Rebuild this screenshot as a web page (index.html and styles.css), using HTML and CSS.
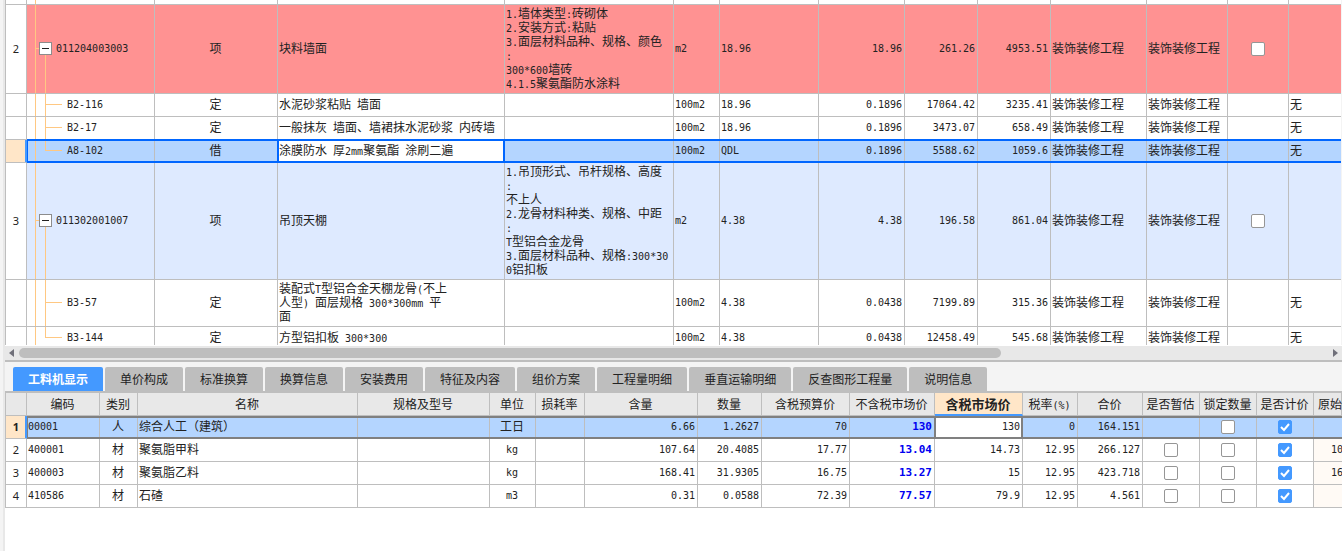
FILE: index.html
```html
<!DOCTYPE html>
<html lang="zh-CN">
<head>
<meta charset="utf-8">
<title>工料机显示</title>
<link rel="stylesheet" href="styles.css">
</head>
<body>
<main class="app">
<section class="upper" aria-label="清单">
<table class="grid bill">
<colgroup><col class="w22"><col class="w128"><col class="w123"><col class="w227"><col class="w169"><col class="w46"><col class="w99"><col class="w86"><col class="w73"><col class="w73"><col class="w96"><col class="w81"><col class="w61"><col></colgroup>
<tbody>
<tr class="h5"><td></td><td class="trunk"></td><td></td><td></td><td></td><td></td><td></td><td></td><td></td><td></td><td></td><td></td><td></td><td></td></tr>
<tr class="h89 red"><td class="idx">2</td><td class="parent"><div class="node"><button class="toggle" aria-label="折叠"></button><span class="n">011204003003</span></div></td><td class="c">项</td><td>块料墙面</td><td><span class="n">1.</span>墙体类型<span class="n">:</span>砖砌体<br><span class="n">2.</span>安装方式<span class="n">:</span>粘贴<br><span class="n">3.</span>面层材料品种、规格、颜色<br><span class="n">:</span><br><span class="n">300*600</span>墙砖<br><span class="n">4.1.5</span>聚氨酯防水涂料</td><td class="n">m2</td><td class="n">18.96</td><td class="n r">18.96</td><td class="n r">261.26</td><td class="n r">4953.51</td><td>装饰装修工程</td><td>装饰装修工程</td><td class="c"><input type="checkbox" class="check" aria-label="选择第2项"></td><td></td></tr>
<tr class="h23"><td class="idx"></td><td class="child n">B2-116</td><td class="c">定</td><td>水泥砂浆粘贴<span class="n"> </span>墙面</td><td></td><td class="n">100m2</td><td class="n">18.96</td><td class="n r">0.1896</td><td class="n r">17064.42</td><td class="n r">3235.41</td><td>装饰装修工程</td><td>装饰装修工程</td><td></td><td>无</td></tr>
<tr class="h23"><td class="idx"></td><td class="child n">B2-17</td><td class="c">定</td><td>一般抹灰<span class="n"> </span>墙面、墙裙抹水泥砂浆<span class="n"> </span>内砖墙</td><td></td><td class="n">100m2</td><td class="n">18.96</td><td class="n r">0.1896</td><td class="n r">3473.07</td><td class="n r">658.49</td><td>装饰装修工程</td><td>装饰装修工程</td><td></td><td>无</td></tr>
<tr class="h23 current"><td class="idx"></td><td class="child last n lead">A8-102</td><td class="c">借</td><td class="cell">涂膜防水<span class="n"> </span>厚<span class="n">2mm</span>聚氨酯<span class="n"> </span>涂刷二遍</td><td></td><td class="n">100m2</td><td class="n">QDL</td><td class="n r">0.1896</td><td class="n r">5588.62</td><td class="n r">1059.6</td><td>装饰装修工程</td><td>装饰装修工程</td><td></td><td>无</td></tr>
<tr class="h117 blue"><td class="idx">3</td><td class="parent"><div class="node"><button class="toggle" aria-label="折叠"></button><span class="n">011302001007</span></div></td><td class="c">项</td><td>吊顶天棚</td><td><span class="n">1.</span>吊顶形式、吊杆规格、高度<br><span class="n">:</span><br>不上人<br><span class="n">2.</span>龙骨材料种类、规格、中距<br><span class="n">:</span><br><span class="n">T</span>型铝合金龙骨<br><span class="n">3.</span>面层材料品种、规格<span class="n">:300*30</span><br><span class="n">0</span>铝扣板</td><td class="n">m2</td><td class="n">4.38</td><td class="n r">4.38</td><td class="n r">196.58</td><td class="n r">861.04</td><td>装饰装修工程</td><td>装饰装修工程</td><td class="c"><input type="checkbox" class="check" aria-label="选择第3项"></td><td></td></tr>
<tr class="h47"><td class="idx"></td><td class="child n">B3-57</td><td class="c">定</td><td>装配式<span class="n">T</span>型铝合金天棚龙骨<span class="n">(</span>不上<br>人型<span class="n">) </span>面层规格<span class="n"> 300*300mm </span>平<br>面</td><td></td><td class="n">100m2</td><td class="n">4.38</td><td class="n r">0.0438</td><td class="n r">7199.89</td><td class="n r">315.36</td><td>装饰装修工程</td><td>装饰装修工程</td><td></td><td>无</td></tr>
<tr class="h23"><td class="idx"></td><td class="child last n">B3-144</td><td class="c">定</td><td>方型铝扣板<span class="n"> 300*300</span></td><td></td><td class="n">100m2</td><td class="n">4.38</td><td class="n r">0.0438</td><td class="n r">12458.49</td><td class="n r">545.68</td><td>装饰装修工程</td><td>装饰装修工程</td><td></td><td>无</td></tr>
</tbody>
</table>
</section>
<div class="scroll">
<button class="arrow" aria-label="向左"><svg width="5" height="8" viewBox="0 0 5 8"><path d="M5 0v8L0 4z"/></svg></button>
<div class="track"><div class="thumb"></div></div>
<button class="arrow" aria-label="向右"><svg width="5" height="8" viewBox="0 0 5 8"><path d="M0 0v8l5-4z"/></svg></button>
</div>
<nav class="tabs">
<button class="tab active">工料机显示</button><button class="tab">单价构成</button><button class="tab">标准换算</button><button class="tab">换算信息</button><button class="tab">安装费用</button><button class="tab">特征及内容</button><button class="tab">组价方案</button><button class="tab">工程量明细</button><button class="tab">垂直运输明细</button><button class="tab">反查图形工程量</button><button class="tab">说明信息</button>
</nav>
<section class="lower" aria-label="工料机显示">
<table class="grid detail">
<colgroup><col class="w22"><col class="w73"><col class="w38"><col class="w220"><col class="w132"><col class="w46"><col class="w49"><col class="w113"><col class="w64"><col class="w88"><col class="w85"><col class="w88"><col class="w55"><col class="w65"><col class="w57"><col class="w57"><col class="w57"><col></colgroup>
<thead>
<tr class="h23"><th></th><th>编码</th><th>类别</th><th>名称</th><th>规格及型号</th><th>单位</th><th>损耗率</th><th>含量</th><th>数量</th><th>含税预算价</th><th>不含税市场价</th><th class="sorted">含税市场价</th><th>税率<span class="n">(%)</span></th><th>合价</th><th>是否暂估</th><th>锁定数量</th><th>是否计价</th><th class="cut">原始</th></tr>
</thead>
<tbody>
<tr class="h23 current"><td class="idx">1</td><td class="n lead">00001</td><td class="c">人</td><td>综合人工（建筑）</td><td></td><td class="c">工日</td><td></td><td class="n r">6.66</td><td class="n r">1.2627</td><td class="n r">70</td><td class="n r price">130</td><td class="n r cell">130</td><td class="n r">0</td><td class="n r">164.151</td><td></td><td class="c"><input type="checkbox" class="check" aria-label="锁定数量"></td><td class="c"><input type="checkbox" class="check" checked aria-label="是否计价"></td><td></td></tr>
<tr class="h23"><td class="idx">2</td><td class="n">400001</td><td class="c">材</td><td>聚氨脂甲料</td><td></td><td class="n c">kg</td><td></td><td class="n r">107.64</td><td class="n r">20.4085</td><td class="n r">17.77</td><td class="n r price">13.04</td><td class="n r">14.73</td><td class="n r">12.95</td><td class="n r">266.127</td><td class="c"><input type="checkbox" class="check" aria-label="是否暂估"></td><td class="c"><input type="checkbox" class="check" aria-label="锁定数量"></td><td class="c"><input type="checkbox" class="check" checked aria-label="是否计价"></td><td class="n orig">10</td></tr>
<tr class="h23"><td class="idx">3</td><td class="n">400003</td><td class="c">材</td><td>聚氨脂乙料</td><td></td><td class="n c">kg</td><td></td><td class="n r">168.41</td><td class="n r">31.9305</td><td class="n r">16.75</td><td class="n r price">13.27</td><td class="n r">15</td><td class="n r">12.95</td><td class="n r">423.718</td><td class="c"><input type="checkbox" class="check" aria-label="是否暂估"></td><td class="c"><input type="checkbox" class="check" aria-label="锁定数量"></td><td class="c"><input type="checkbox" class="check" checked aria-label="是否计价"></td><td class="n orig">16</td></tr>
<tr class="h23"><td class="idx">4</td><td class="n">410586</td><td class="c">材</td><td>石碴</td><td></td><td class="n c">m3</td><td></td><td class="n r">0.31</td><td class="n r">0.0588</td><td class="n r">72.39</td><td class="n r price">77.57</td><td class="n r">79.9</td><td class="n r">12.95</td><td class="n r">4.561</td><td class="c"><input type="checkbox" class="check" aria-label="是否暂估"></td><td class="c"><input type="checkbox" class="check" aria-label="锁定数量"></td><td class="c"><input type="checkbox" class="check" checked aria-label="是否计价"></td><td class="orig"></td></tr>
</tbody>
</table>
</section>
</main>
</body>
</html>
```
FILE: styles.css
```css
:root {
  --line: #bebebe;
  --accent: #4499ff;
  --peach: #ffe6c8;
  --branch: #ffc882;
  --soft: #e8e8e8;
}
* { box-sizing: border-box; }
body {
  margin: 0;
  background: #f4f4f4;
  color: #222;
  font: 12px/14px "Noto Sans CJK SC", sans-serif;
  overflow: hidden;
}
button { font: inherit; border: 0; padding: 0; }
.app {
  display: flex;
  flex-direction: column;
  min-height: 100vh;
  margin-left: 3px;
  border-left: 2px solid var(--soft);
}

/* Grids */
.grid {
  width: 100%;
  table-layout: fixed;
  border-collapse: separate;
  border-spacing: 0;
  background: #fff;
}
.grid td, .grid th {
  padding: 0 2px 3px 1px;
  border-right: 1px solid var(--line);
  border-bottom: 1px solid var(--line);
  white-space: pre;
  font-weight: normal;
  text-align: left;
}
.grid td:first-child, .grid th:first-child { border-left: 1px solid var(--line); }
.grid td:last-child { border-right: 0; }
.grid .n {
  font-family: "DejaVu Sans Mono", "Noto Sans CJK SC", monospace;
  font-size: 10px;
}
.grid td.n, .grid .parent { padding-bottom: 1px; }
.grid span.n { line-height: 1; }
.grid .c { text-align: center; }
.grid .r { text-align: right; }
.grid .idx {
  padding: 0;
  background: #fff;
  font-family: "Noto Sans", sans-serif;
  font-size: 11px;
  text-align: center;
}
.w22 { width: 22px; } .w38 { width: 38px; } .w46 { width: 46px; }
.w49 { width: 49px; } .w55 { width: 55px; } .w57 { width: 57px; }
.w61 { width: 61px; } .w64 { width: 64px; } .w65 { width: 65px; }
.w73 { width: 73px; } .w81 { width: 81px; } .w85 { width: 85px; }
.w86 { width: 86px; } .w88 { width: 88px; } .w96 { width: 96px; }
.w99 { width: 99px; } .w113 { width: 113px; } .w123 { width: 123px; }
.w128 { width: 128px; } .w132 { width: 132px; } .w169 { width: 169px; }
.w220 { width: 220px; } .w227 { width: 227px; }
.h5 { height: 5px; }
.h23 { height: 23px; --mid: 10px; }
.h47 { height: 47px; --mid: 22px; }
.h89 { height: 89px; --mid: 43px; }
.h117 { height: 117px; --mid: 57px; }
.grid .h5 td { padding: 0; }

/* Row states */
.red { background: #ff9292; }
.blue { background: #deeaff; }
.current { background: #b4d5ff; --frame: #808080; }
.bill .current { --frame: #0066ff; }
.lead { position: relative; }
.lead::after {
  content: "";
  position: absolute;
  z-index: 1;
  inset: 0 auto -1px 0;
  width: 100vw;
  border: 2px solid var(--frame);
  border-left-width: 1px;
  pointer-events: none;
}
.bill .lead::after { top: -1px; }
.grid .current .idx {
  background: var(--peach);
  border-right-color: var(--accent);
  box-shadow: inset -1px 0 var(--accent);
  font-weight: bold;
}
.current .cell { position: relative; background: #fff; }
.current .cell::after {
  content: "";
  position: absolute;
  inset: 0 -1px 0 -1px;
  border: solid var(--frame);
  border-width: 0 2px;
}

/* Tree column */
.trunk, .parent, .child {
  --b: linear-gradient(var(--branch), var(--branch));
  background: var(--b) 8px 0 / 1px 100% no-repeat;
  background-clip: border-box;
  background-origin: padding-box;
}
.parent {
  background: var(--b) 8px 0 / 1px 100% no-repeat,
    var(--b) 18px 100% / 1px 50% no-repeat,
    var(--b) 8px var(--mid) / 5px 1px no-repeat;
}
.grid .parent { padding-left: 12px; }
.child {
  background: var(--b) 8px 0 / 1px 100% no-repeat,
    var(--b) 18px 0 / 1px 100% no-repeat,
    var(--b) 18px var(--mid) / 17px 1px no-repeat;
}
.child.last { background-size: 1px 100%, 1px var(--mid), 17px 1px; }
.grid .child { padding-left: 40px; }
.node { display: flex; align-items: center; gap: 4px; }
.toggle {
  width: 13px;
  height: 13px;
  border: 1px solid #8c8c8c;
  background: linear-gradient(#222, #222) center / 7px 1px no-repeat #fff;
}

/* Checkbox */
.check {
  appearance: none;
  display: block;
  width: 14px;
  height: 14px;
  margin: 3px auto 0;
  border: 1px solid #969696;
  border-radius: 2px;
  background: #fff;
}
.check:checked {
  border-color: var(--accent);
  background: url("data:image/svg+xml,%3Csvg xmlns='http://www.w3.org/2000/svg' viewBox='0 0 12 12'%3E%3Cpath d='M2 6l3 3 5-6' fill='none' stroke='white' stroke-width='2'/%3E%3C/svg%3E") center / 12px 12px no-repeat var(--accent);
}

/* Upper pane */
.upper { height: 345px; margin-right: 1px; overflow: hidden; background: #fff; }
.scroll {
  display: flex;
  align-items: center;
  height: 17px;
  padding: 0 4px;
  border-top: 1px solid #fff;
  border-bottom: 2px solid var(--line);
  background: var(--soft);
}
.arrow { display: flex; width: 6px; background: none; fill: #70707a; }
.arrow:last-child { justify-content: flex-end; }
.track { flex: 1; margin: 0 4px; }
.thumb { width: 75%; height: 10px; border-radius: 5px; background: var(--line); }

/* Tabs */
.tabs {
  display: flex;
  gap: 2px;
  padding: 5px 8px 0;
  border-bottom: 2px solid var(--line);
}
.tab {
  height: 24px;
  padding: 0 15px;
  border-radius: 2px 2px 0 0;
  background: var(--line);
  color: #222;
  white-space: nowrap;
}
.tab.active { background: var(--accent); color: #fff; font-weight: bold; }

/* Lower pane */
.lower { flex: 1; background: #fff; overflow: hidden; }
.grid th { background: var(--soft); text-align: center; padding: 0 1px 0 0; }
.grid .sorted {
  background: var(--peach);
  border-bottom: 2px solid var(--accent);
  font-size: 13px;
  font-weight: bold;
}
.grid .cut { padding-left: 4px; text-align: left; }
.grid .price { color: #0000f0; font-size: 11px; font-weight: bold; }
.grid .orig { padding-left: 17px; background: #fffaf5; }
```
